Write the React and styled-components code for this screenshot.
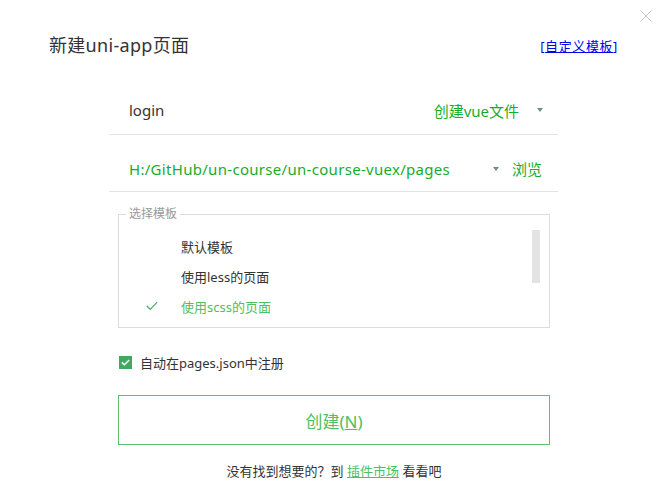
import React, { useState } from "react";
import styled, { createGlobalStyle } from "styled-components";

const GlobalStyle = createGlobalStyle`
  body {
    margin: 0;
    background: #fff;
    font-family: "Noto Sans", "Noto Sans CJK SC", sans-serif;
    color: #333;
  }
`;

const Dialog = styled.div`
  position: relative;
  width: 663px;
  height: 499px;
  background: #fff;
  overflow: hidden;
`;

const CloseButton = styled.button`
  position: absolute;
  top: 10px;
  right: 11px;
  width: 12px;
  height: 12px;
  padding: 0;
  border: none;
  background: none;
  cursor: pointer;
  display: flex;
`;

const Header = styled.div`
  display: flex;
  justify-content: space-between;
  align-items: center;
  height: 24px;
  padding: 33px 45px 0 49px;
`;

const Title = styled.div`
  font-size: 18px;
  line-height: 24px;
  letter-spacing: 0.3px;
  color: #333;
`;

const TemplateLink = styled.span`
  font-size: 13px;
  letter-spacing: 0.6px;
  color: #0000ee;
  a {
    color: #0000ee;
    text-decoration: underline;
  }
`;

const Form = styled.div`
  margin: 32px 105px 0 109px;
  display: flex;
  flex-direction: column;
`;

const Row = styled.div`
  display: flex;
  align-items: center;
  box-sizing: border-box;
  height: 46px;
  margin-top: ${(p) => (p.$second ? "11px" : "0")};
  padding: ${(p) => (p.$second ? "1px 16px 1px 20px" : "0 15px 3px 20px")};
  border-bottom: 1px solid #e3e3e3;
  font-size: 15px;
`;

const NameInput = styled.div`
  flex: 1;
  color: #333;
`;

const PathInput = styled.div`
  flex: 1;
  color: #17ad2c;
  letter-spacing: 0.3px;
`;

const SelectText = styled.span`
  color: #17ad2c;
`;

const Caret = styled.span`
  width: 0;
  height: 0;
  border-left: 3px solid transparent;
  border-right: 3px solid transparent;
  border-top: 4px solid #6f8f78;
  margin-left: ${(p) => p.$left || 0}px;
  margin-right: ${(p) => p.$right || 0}px;
`;

const Browse = styled.span`
  color: #17ad2c;
  cursor: pointer;
`;

const Fieldset = styled.fieldset`
  margin: 15px 8px 0 9px;
  padding: 0;
  border: 1px solid #dcdcdc;
  min-width: 0;
`;

const Legend = styled.legend`
  font-size: 12px;
  line-height: 14px;
  color: #999;
  margin-left: 7px;
  padding: 0 3px;
`;

const TemplateList = styled.div`
  position: relative;
  padding: 10px 0 6px;
`;

const TemplateItem = styled.div`
  display: flex;
  align-items: center;
  height: 30px;
  font-size: 13px;
  color: ${(p) => (p.$active ? "#4cc062" : "#333")};
  cursor: pointer;
`;

const CheckCol = styled.span`
  display: flex;
  width: 35px;
  padding-left: 27px;
`;

const ScrollThumb = styled.div`
  position: absolute;
  top: 9px;
  right: 9px;
  width: 8px;
  height: 53px;
  background: #e3e3e3;
`;

const CheckRow = styled.label`
  display: flex;
  align-items: center;
  height: 20px;
  margin: 24px 0 0 10px;
  font-size: 13px;
  color: #333;
  cursor: pointer;
`;

const CheckBox = styled.span`
  display: flex;
  align-items: center;
  justify-content: center;
  width: 13px;
  height: 13px;
  background: ${(p) => (p.$checked ? "#41a85f" : "#fff")};
  border: ${(p) => (p.$checked ? "none" : "1px solid #bbb")};
  margin-right: 8px;
`;

const CreateButton = styled.button`
  margin: 23px 8px 0 9px;
  height: 50px;
  border: 1px solid #5cc26c;
  background: #fff;
  color: #4cc062;
  font-family: inherit;
  font-size: 17px;
  cursor: pointer;
  u {
    text-decoration: underline;
  }
`;

const Footer = styled.div`
  margin: 16px 8px 0 9px;
  text-align: center;
  font-size: 13px;
  line-height: 20px;
  color: #333;
  a {
    color: #4cc062;
    text-decoration: underline;
  }
`;

const templates = ["默认模板", "使用less的页面", "使用scss的页面"];

function App() {
  const [selected, setSelected] = useState(2);
  const [autoRegister, setAutoRegister] = useState(true);

  return (
    <>
      <GlobalStyle />
      <Dialog>
        <CloseButton aria-label="close">
          <svg width="12" height="12" viewBox="0 0 12 12">
            <path d="M0.5 0.5 L11.5 11.5 M11.5 0.5 L0.5 11.5" stroke="#c4c4c4" strokeWidth="1" fill="none" />
          </svg>
        </CloseButton>
        <Header>
          <Title>新建uni-app页面</Title>
          <TemplateLink>
            [<a href="#">自定义模板</a>]
          </TemplateLink>
        </Header>
        <Form>
          <Row>
            <NameInput>login</NameInput>
            <SelectText>创建vue文件</SelectText>
            <Caret $left={18} />
          </Row>
          <Row $second>
            <PathInput>H:/GitHub/un-course/un-course-vuex/pages</PathInput>
            <Caret $right={13} />
            <Browse>浏览</Browse>
          </Row>
          <Fieldset>
            <Legend>选择模板</Legend>
            <TemplateList>
              {templates.map((t, i) => (
                <TemplateItem key={t} $active={i === selected} onClick={() => setSelected(i)}>
                  <CheckCol>
                    {i === selected && (
                      <svg width="12" height="10" viewBox="0 0 12 10">
                        <polyline points="0.8,5 4.3,8.3 11.2,1.2" stroke="#4caf6a" strokeWidth="1.2" fill="none" />
                      </svg>
                    )}
                  </CheckCol>
                  {t}
                </TemplateItem>
              ))}
              <ScrollThumb />
            </TemplateList>
          </Fieldset>
          <CheckRow onClick={() => setAutoRegister(!autoRegister)}>
            <CheckBox $checked={autoRegister}>
              {autoRegister && (
                <svg width="9" height="7" viewBox="0 0 9 7">
                  <polyline points="0.8,3.4 3.4,5.8 8.2,1" stroke="#fff" strokeWidth="1.5" fill="none" />
                </svg>
              )}
            </CheckBox>
            自动在pages.json中注册
          </CheckRow>
          <CreateButton>
            创建(<u>N</u>)
          </CreateButton>
          <Footer>
            没有找到想要的？到 <a href="#">插件市场</a> 看看吧
          </Footer>
        </Form>
      </Dialog>
    </>
  );
}

export default App;
